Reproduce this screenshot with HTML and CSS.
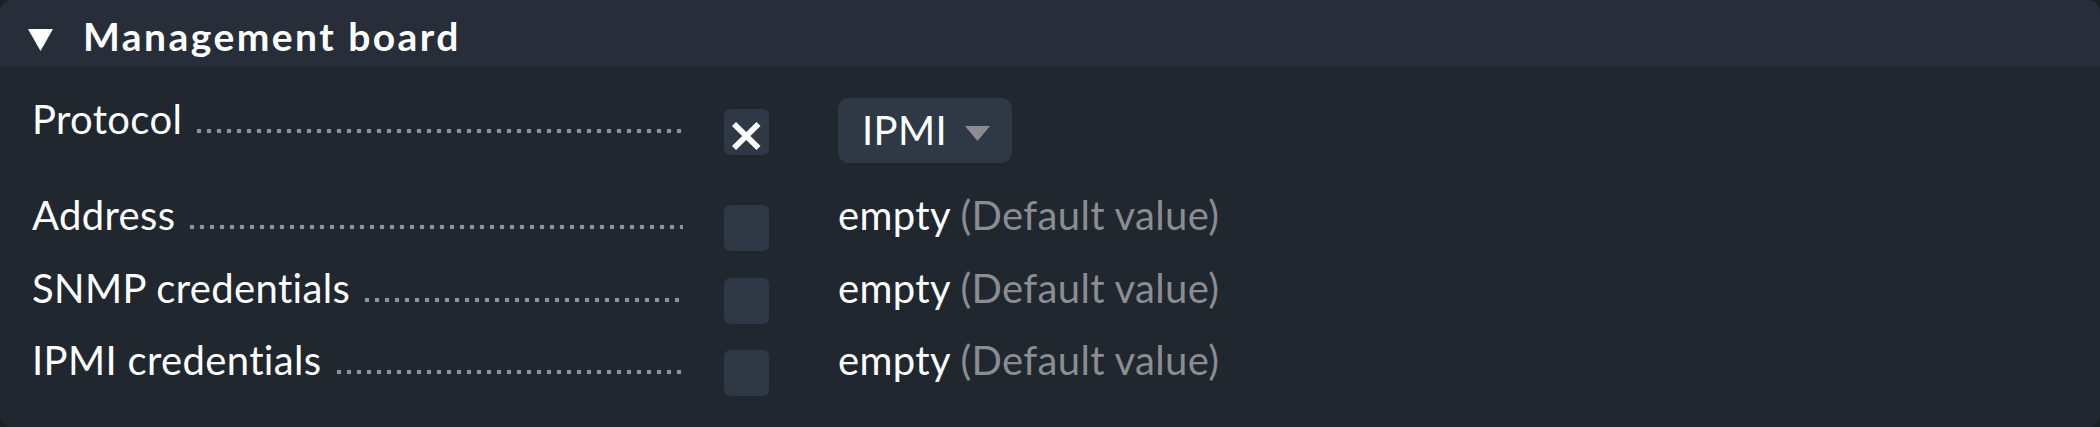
FILE: index.html
```html
<!DOCTYPE html>
<html lang="en">
<head>
<meta charset="utf-8">
<title>Management board</title>
<link rel="stylesheet" href="styles.css">
</head>
<body>
<div class="panel">
  <div class="panel-head">
    <svg class="caret" width="25" height="22" viewBox="0 0 25 22"><polygon points="0,0 25,0 12.5,22" fill="#ffffff"/></svg>
    <span class="panel-title">Management board</span>
  </div>
  <div class="panel-body">
    <div class="row row-first">
      <div class="label"><span class="label-text">Protocol</span><span class="dots"></span></div>
      <div class="check checked">
        <svg width="45" height="46" viewBox="0 0 45 46"><line x1="10" y1="15" x2="34.5" y2="39" stroke="#fff" stroke-width="5.8"/><line x1="34.5" y1="15" x2="10" y2="39" stroke="#fff" stroke-width="5.8"/></svg>
      </div>
      <div class="value">
        <div class="select"><span class="select-text">IPMI</span><svg class="select-arrow" width="25" height="15" viewBox="0 0 25 15"><polygon points="0,0 25,0 12.5,15" fill="#8b8d90"/></svg></div>
      </div>
    </div>
    <div class="row">
      <div class="label"><span class="label-text">Address</span><span class="dots"></span></div>
      <div class="check"></div>
      <div class="value text-value">empty <span class="muted">(Default value)</span></div>
    </div>
    <div class="row">
      <div class="label"><span class="label-text">SNMP credentials</span><span class="dots"></span></div>
      <div class="check"></div>
      <div class="value text-value">empty <span class="muted">(Default value)</span></div>
    </div>
    <div class="row">
      <div class="label"><span class="label-text">IPMI credentials</span><span class="dots"></span></div>
      <div class="check"></div>
      <div class="value text-value">empty <span class="muted">(Default value)</span></div>
    </div>
  </div>
</div>
</body>
</html>
```
FILE: styles.css
```css
html, body {
  margin: 0;
  padding: 0;
  background: #1b2027;
}
body {
  font-family: Lato, "Noto Sans", sans-serif;
  color: #ffffff;
  width: 2100px;
  height: 427px;
  overflow: hidden;
}
.panel {
  background: #21272f;
  border-radius: 12px;
  overflow: hidden;
  height: 427px;
}
.panel-head {
  box-sizing: border-box;
  height: 67px;
  padding: 4px 0 0 28px;
  display: flex;
  align-items: center;
  background: #272e39;
}
.caret {
  display: block;
  margin-top: 9px;
  flex: none;
}
.panel-title {
  margin-left: 30px;
  font-size: 39px;
  line-height: 46px;
  font-weight: 700;
  letter-spacing: 2.45px;
}
.panel-body {
  padding: 28px 0 31px 32px;
  display: flex;
  flex-direction: column;
  gap: 12.5px;
}
.row {
  display: flex;
  align-items: flex-start;
  font-size: 40px;
  line-height: 48px;
  letter-spacing: 0.35px;
}
.row-first {
  margin-bottom: 15.5px;
}
.label {
  width: 651px;
  flex: none;
  display: flex;
  align-items: baseline;
}
.label-text {
  white-space: nowrap;
}
.dots {
  flex: 1;
  height: 6px;
  margin-left: 12px;
  background-image: radial-gradient(circle at 5px 3px, #8f9296 2.1px, transparent 2.6px);
  background-size: 10px 6px;
  background-repeat: repeat-x;
}
.check {
  flex: none;
  width: 45px;
  height: 46px;
  margin-top: 14px;
  margin-left: 41px;
  border-radius: 6px;
  background: #2f3845;
}
.check svg {
  display: block;
}
.value {
  margin-left: 69px;
  white-space: nowrap;
}
.select {
  display: flex;
  align-items: center;
  height: 65px;
  box-sizing: border-box;
  margin-top: 3px;
  padding: 8px 22px 9px 24px;
  border-radius: 11px;
  background: #2f3845;
}
.select-text {
  line-height: 48px;
}
.select-arrow {
  display: block;
  margin-left: 18px;
  margin-top: 6px;
}
.muted {
  color: #8a8d91;
}
```
